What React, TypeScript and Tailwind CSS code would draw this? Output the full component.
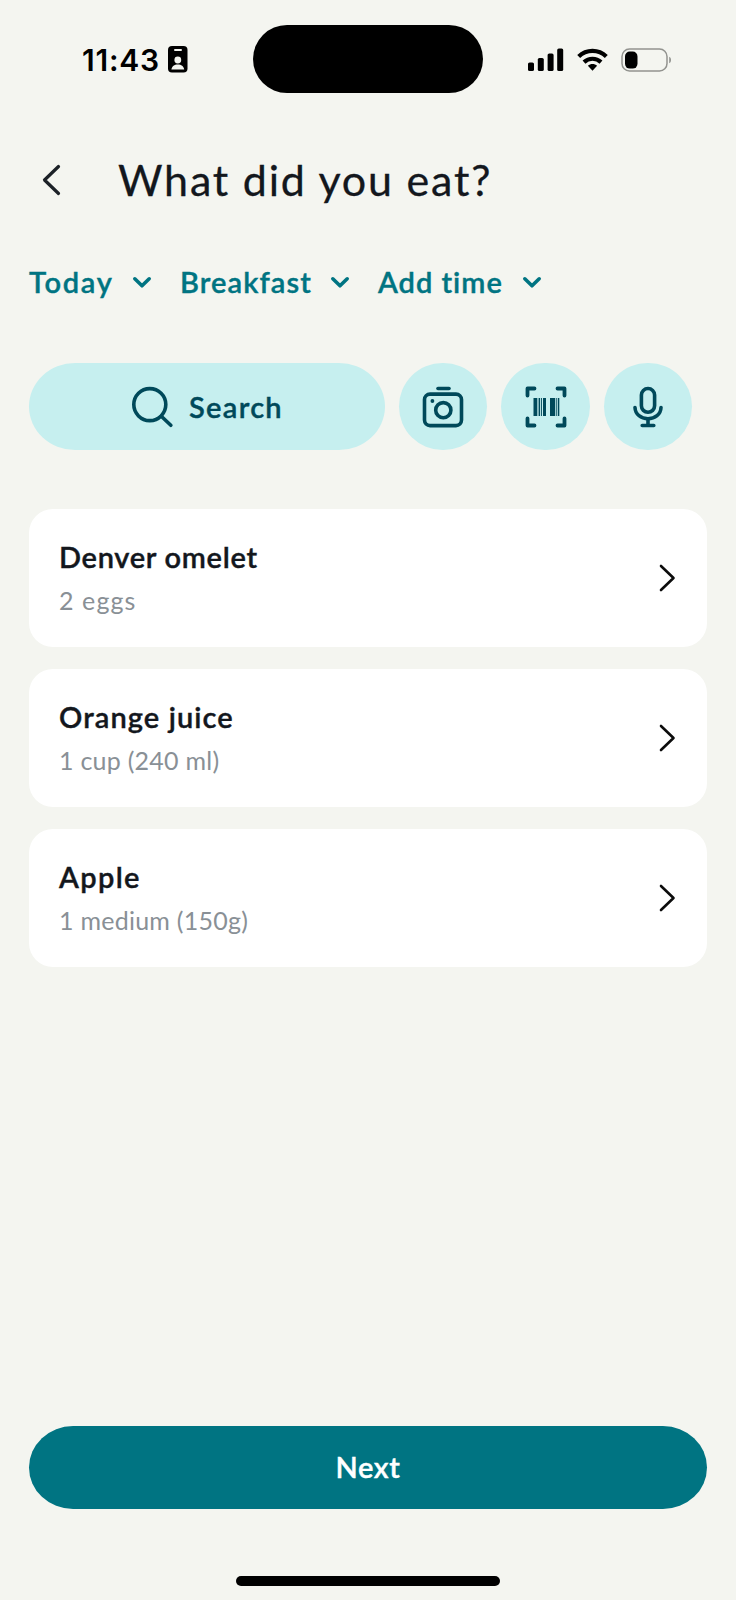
import React from "react";

type Food = {
  id: number;
  name: string;
  amount: string;
  nameClass: string;
  amountClass: string;
};

const foods: Food[] = [
  { id: 1, name: "Denver omelet", amount: "2 eggs", nameClass: "tracking-[0.7px]", amountClass: "tracking-[1.1px]" },
  { id: 2, name: "Orange juice", amount: "1 cup (240 ml)", nameClass: "tracking-[1.1px]", amountClass: "tracking-[0.25px]" },
  { id: 3, name: "Apple", amount: "1 medium (150g)", nameClass: "tracking-[1.35px]", amountClass: "tracking-[0.25px]" },
];

const filters = [
  { label: "Today", className: "w-[151px] pr-[28px] tracking-[1.7px]" },
  { label: "Breakfast", className: "w-[198px] pr-[28px] tracking-[1.1px]" },
  { label: "Add time", className: "w-[164px] tracking-[1px]" },
];

function StatusBar() {
  return (
    <div className="flex h-[68px] items-center text-black">
      <div className="flex w-[253px] items-center pl-[82px]">
        <span className="mt-[2px] w-[86px] whitespace-nowrap font-['Inter',sans-serif] text-[30px] leading-none font-semibold tracking-[0.8px]">11:43</span>
        <svg width="20" height="27" viewBox="0 0 20 27">
          <rect width="19.5" height="26.5" rx="4" fill="currentColor" />
          <rect x="6" y="3" width="8" height="2" rx="1" fill="#f4f5f0" />
          <circle cx="9.8" cy="14" r="3.4" fill="#f4f5f0" />
          <path d="M3.4 23.6c.4-3.3 3-5.2 6.4-5.2s6 1.9 6.4 5.2z" fill="#f4f5f0" />
        </svg>
      </div>
      <div className="h-[68px] w-[230px] rounded-full bg-black" />
      <div className="flex items-center pt-px pl-[45px]">
        <svg width="36" height="24" viewBox="0 0 36 24" fill="currentColor">
          <rect x="0" y="14.5" width="6" height="8.5" rx="1.6" />
          <rect x="9.8" y="10" width="6" height="13" rx="1.6" />
          <rect x="19.6" y="5.5" width="6" height="17.5" rx="1.6" />
          <rect x="29.2" y="0.5" width="6" height="22.5" rx="1.6" />
        </svg>
        <svg className="ml-[13px]" width="31" height="24" viewBox="0 0 31 24" fill="none" stroke="currentColor" strokeWidth="4.2">
          <path d="M1.7 8.4C9.4 1 21.6 1 29.3 8.4" />
          <path d="M7 14.1c4.8-4.5 12.2-4.5 17 0" />
          <path d="M10.9 17.8c2.6-2.4 6.6-2.4 9.2 0L15.5 22.8z" fill="currentColor" stroke="none" />
        </svg>
        <svg className="ml-[13px]" width="51" height="24" viewBox="0 0 51 24">
          <rect x="1" y="1" width="45" height="22" rx="7.5" fill="none" stroke="#92938f" strokeWidth="1.5" />
          <rect x="4" y="3.6" width="12.5" height="17" rx="4.8" fill="currentColor" />
          <path d="M48.2 8.8c2.4.8 2.4 5.6 0 6.4z" fill="#92938f" />
        </svg>
      </div>
    </div>
  );
}

function ChevronDown() {
  return (
    <svg className="mt-px" width="20" height="14" viewBox="0 0 20 14" fill="none" stroke="currentColor" strokeWidth="3.6" strokeLinecap="round" strokeLinejoin="round">
      <path d="M2.8 2.8 10 9.8l7.2-7" />
    </svg>
  );
}

function SearchIcon() {
  return (
    <svg width="42" height="42" viewBox="0 0 42 42" fill="none" stroke="currentColor" strokeWidth="3.6" strokeLinecap="round">
      <circle cx="18.8" cy="18.6" r="16" />
      <path d="m30.3 30.3 9.5 9" />
    </svg>
  );
}

function CameraIcon() {
  return (
    <svg width="42" height="42" viewBox="0 0 42 42" fill="none" stroke="currentColor" strokeWidth="3.6" strokeLinecap="round">
      <path d="M16 2.5h11" />
      <rect x="2.5" y="8.1" width="37" height="31.5" rx="5.5" />
      <circle cx="21.3" cy="24.2" r="7.6" />
      <circle cx="10.4" cy="15" r="1.9" fill="currentColor" stroke="none" />
    </svg>
  );
}

function BarcodeIcon() {
  return (
    <svg width="42" height="42" viewBox="0 0 42 42" fill="none" stroke="currentColor" strokeWidth="3.8">
      <path d="M2.5 9.5v-7h7M32.500 2.500h7v7M39.500 32.500v7h-7M9.500 39.500h-7v-7" strokeLinecap="round" strokeLinejoin="round" />
      <g fill="currentColor" stroke="none">
        <rect x="8.5" y="12" width="3.8" height="18" />
        <rect x="13.6" y="12" width="1.5" height="18" />
        <rect x="16" y="12" width="0.9" height="18" />
        <rect x="18" y="12" width="3" height="18" />
        <rect x="25" y="12" width="5.2" height="18" />
        <rect x="31.3" y="12" width="0.9" height="18" />
        <rect x="33" y="12" width="1.3" height="18" />
      </g>
    </svg>
  );
}

function MicIcon() {
  return (
    <svg width="42" height="42" viewBox="0 0 42 42" fill="none" stroke="currentColor" strokeWidth="3.6" strokeLinecap="round">
      <rect x="14.4" y="2.5" width="13.2" height="23.8" rx="6.6" />
      <path d="M8 21.5c.3 7 6 11.2 13 11.2s12.7-4.2 13-11.2" />
      <path d="M21 33v6.5M15.2 39.5h11.6" />
    </svg>
  );
}

function FoodCard({ food }: { food: Food }) {
  return (
    <div className="flex h-[137.5px] items-center justify-between rounded-[24px] bg-white pr-[30px] pl-[30px]">
      <div className="flex flex-col whitespace-nowrap">
        <h4 className={`text-[29px] leading-[36px] font-semibold text-[#13171d] [-webkit-text-stroke:0.4px] ${food.nameClass}`}>{food.name}</h4>
        <p className={`mt-[8px] text-[25px] leading-[34px] text-[#899096] ${food.amountClass}`}>{food.amount}</p>
      </div>
      <svg width="20" height="30" viewBox="0 0 20 30" fill="none" stroke="#0c0c0c" strokeWidth="2.6" strokeLinecap="round" strokeLinejoin="round">
        <path d="M4 3 16.5 15 4 27" />
      </svg>
    </div>
  );
}

export default function App() {
  return (
    <div className="flex h-[1600px] w-[736px] flex-col bg-[#f4f5f0] pt-[25px] font-['Lato',sans-serif]">
      <StatusBar />

      <header className="mt-[52px] flex h-[70px] items-center pl-[41px]">
        <svg width="22" height="32" viewBox="0 0 22 32" fill="none" stroke="#1c2127" strokeWidth="3.2" strokeLinecap="round" strokeLinejoin="round">
          <path d="M17.5 2.5 3.5 16 17.5 29.5" />
        </svg>
        <h1 className="ml-[55px] whitespace-nowrap text-[43px] leading-[50px] tracking-[1.8px] text-[#13171d] [-webkit-text-stroke:0.3px]">What did you eat?</h1>
      </header>

      {/* Meal filters */}
      <div className="mt-[43px] flex h-[48px] items-center pl-[29px] text-[29px] font-semibold text-[#007482] [-webkit-text-stroke:0.4px]">
        {filters.map((filter) => (
          <button key={filter.label} className={`flex items-center justify-between whitespace-nowrap ${filter.className}`}>
            <span>{filter.label}</span>
            <ChevronDown />
          </button>
        ))}
      </div>

      <div className="mt-[57px] flex gap-[14px] pl-[29px] text-[#00495a]">
        <button className="flex h-[87px] w-[356px] items-center rounded-[46px/43.5px] bg-[#c6efef] pl-[102px]">
          <SearchIcon />
          <span className="ml-[16px] text-[29px] font-semibold tracking-[1.3px] [-webkit-text-stroke:0.4px]">Search</span>
        </button>
        <button className="flex h-[87px] w-[88px] items-center justify-center rounded-full bg-[#c6efef]">
          <CameraIcon />
        </button>
        <button className="flex h-[87px] w-[89px] items-center justify-center rounded-full bg-[#c6efef]">
          <BarcodeIcon />
        </button>
        <button className="flex h-[87px] w-[88px] items-center justify-center rounded-full bg-[#c6efef]">
          <MicIcon />
        </button>
      </div>

      <div className="mt-[59px] flex flex-col gap-[22.5px] pr-[29px] pl-[29px]">
        {foods.map((food) => (
          <FoodCard key={food.id} food={food} />
        ))}
      </div>

      <div className="mt-auto flex flex-col items-center pb-[14px]">
        <button className="h-[83px] w-[678px] rounded-[44px/41.5px] bg-[#007482] pb-[2px] text-[29px] font-semibold tracking-[0.6px] text-white [-webkit-text-stroke:0.4px]">Next</button>
        <div className="mt-[67px] h-[10px] w-[264px] rounded-full bg-black" />
      </div>
    </div>
  );
}
